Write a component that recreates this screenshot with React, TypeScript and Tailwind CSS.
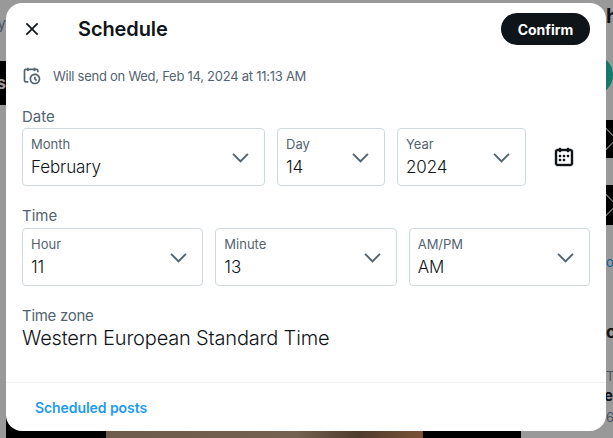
import React from 'react';

const font = 'font-["Inter","Liberation_Sans",sans-serif]';

const Chevron: React.FC = () => (
  <svg viewBox="0 0 24 24" className="w-[23px] h-[23px] fill-[#536471] shrink-0">
    <path d="M3.543 8.96l1.414-1.42L12 14.59l7.043-7.05 1.414 1.42L12 17.41 3.543 8.96z" />
  </svg>
);

const Field: React.FC<{ label: string; value: string; className: string }> = ({ label, value, className }) => (
  <div className={`h-[58px] border border-[#cfd9de] rounded-[4px] flex items-center justify-between pl-2 pr-[12px] ${className}`}>
    <div className="flex flex-col">
      <span className="text-[13px] leading-[16px] text-[#536471] -mt-[1px]">{label}</span>
      <span className="text-[17px] leading-[24px] font-light tracking-[-0.1px] text-[#0f1419] mt-[3px] -mb-[1px]">{value}</span>
    </div>
    <Chevron />
  </div>
);

export default function App() {
  return (
    <div className={`w-[613px] h-[438px] overflow-hidden bg-[#999999] flex flex-col ${font}`}>
      <div className="h-[3px] shrink-0" />
      <div className="flex h-[428px] shrink-0 relative z-10">
        {/* page behind the dialog, left edge */}
        <div className="w-[6px] shrink-0 overflow-hidden flex flex-col items-end">
          <div className="h-[12px] shrink-0" />
          <span className="text-[15px] leading-[18px] text-[#4b5258] whitespace-nowrap">y</span>
          <div className="h-[28px] shrink-0" />
          <div className="w-[6px] h-[44px] bg-black overflow-hidden flex items-center justify-end shrink-0">
            <span className="text-[17px] font-bold text-[#9a9a9a] leading-none">s</span>
          </div>
        </div>

        <div className="w-[600px] shrink-0 bg-white rounded-[16px] flex flex-col">
          <div className="h-[52px] flex items-center pl-4 pr-4 shrink-0">
            <svg viewBox="0 0 24 24" className="w-5 h-5 fill-[#0f1419]">
              <path d="M10.59 12L4.54 5.96l1.42-1.42L12 10.59l6.04-6.05 1.42 1.42L13.41 12l6.05 6.04-1.42 1.42L12 13.41l-6.04 6.05-1.42-1.42L10.59 12z" />
            </svg>
            <h1 className="ml-[36px] text-[20px] leading-[24px] font-semibold tracking-[-0.1px] text-[#0f1419] flex-1">Schedule</h1>
            <button className="w-[89px] h-[32px] rounded-full bg-[#0f1419] text-white text-[14px] font-bold">Confirm</button>
          </div>

          <div className="flex items-center pl-4 h-[20px] mt-[11px]">
            <svg viewBox="0 0 24 24" className="w-5 h-5 fill-[#536471] shrink-0">
              <path d="M6 3V2h2v1h6V2h2v1h1.5C18.88 3 20 4.119 20 5.5v2h-2v-2c0-.276-.22-.5-.5-.5H16v1h-2V5H8v1H6V5H4.5c-.28 0-.5.224-.5.5v12c0 .276.22.5.5.5h3v2h-3C3.12 20 2 18.881 2 17.5v-12C2 4.119 3.12 3 4.5 3H6zm9.5 8c-2.49 0-4.5 2.015-4.5 4.5s2.01 4.5 4.5 4.5 4.5-2.015 4.5-4.5-2.01-4.5-4.5-4.5zM9 15.5C9 11.91 11.91 9 15.5 9s6.5 2.91 6.5 6.5-2.91 6.5-6.5 6.5S9 19.09 9 15.5zm5.5-2.5h2v2.086l1.71 1.707-1.42 1.414-2.29-2.293V13z" />
            </svg>
            <span className="ml-[11px] text-[13px] leading-[16px] tracking-[-0.26px] text-[#536471]">Will send on Wed, Feb 14, 2024 at 11:13 AM</span>
          </div>

          <div className="px-4 mt-[21px]">
            <div className="text-[15px] leading-[20px] text-[#536471]">Date</div>
            <div className="flex gap-3 mt-[1px] items-center">
              <Field label="Month" value="February" className="w-[243px]" />
              <Field label="Day" value="14" className="w-[108px]" />
              <Field label="Year" value="2024" className="w-[129px]" />
              <div className="flex-1 flex justify-center">
                <svg viewBox="0 0 24 24" className="w-6 h-6 fill-[#0f1419] stroke-[#0f1419] stroke-[0.4]">
                  <path d="M7 4V3h2v1h6V3h2v1h1.5C19.89 4 21 5.12 21 6.5v12c0 1.38-1.11 2.5-2.5 2.5h-13C4.12 21 3 19.88 3 18.5v-12C3 5.12 4.12 4 5.5 4H7zm0 2H5.5c-.27 0-.5.22-.5.5v12c0 .28.23.5.5.5h13c.28 0 .5-.22.5-.5v-12c0-.28-.22-.5-.5-.5H17v1h-2V6H9v1H7V6zm0 6h2v-2H7v2zm0 4h2v-2H7v2zm4-4h2v-2h-2v2zm0 4h2v-2h-2v2zm4-4h2v-2h-2v2z" />
                </svg>
              </div>
            </div>

            <div className="text-[15px] leading-[20px] text-[#536471] mt-[20px]">Time</div>
            <div className="flex gap-3 mt-[2px]">
              <Field label="Hour" value="11" className="flex-1" />
              <Field label="Minute" value="13" className="flex-1" />
              <Field label="AM/PM" value="AM" className="flex-1" />
            </div>

            <div className="text-[15px] leading-[20px] tracking-[-0.3px] text-[#536471] mt-[20px]">Time zone</div>
            <div className="text-[20px] leading-[24px] font-light tracking-[-0.17px] text-[#0f1419]">Western European Standard Time</div>
          </div>

          <div className="mt-auto h-[49px] border-t border-[#eff3f4] flex items-center px-[29px] shrink-0">
            <span className="text-[14px] font-semibold tracking-[-0.07px] text-[#1d9bf0]">Scheduled posts</span>
          </div>
        </div>

        {/* page behind the dialog, right edge */}
        <div className="w-[7px] shrink-0 overflow-hidden flex flex-col">
          <span className="text-[20px] font-bold leading-[24px] text-[#0f1419] h-[24px] mt-[1px]">h</span>
          <div className="w-[40px] h-[40px] shrink-0 rounded-full bg-[#13796b] -ml-[33px] mt-[27px] self-start" />
          <div className="h-[38px] shrink-0 bg-black mt-[25px] flex items-center">
            <div className="w-[20px] h-[20px] shrink-0 rotate-45 border border-[#8a8a8a] -ml-[13px]" />
          </div>
          <div className="h-[40px] shrink-0 bg-black mt-[27px] flex items-center">
            <div className="w-[20px] h-[20px] shrink-0 rotate-45 border border-[#8a8a8a] -ml-[13px]" />
          </div>
          <span className="text-[13px] leading-[16px] text-[#0f5e96] mt-[29px] h-[16px] whitespace-nowrap">ov</span>
          <span className="text-[17px] font-bold leading-[20px] text-[#0f1419] mt-[52px] h-[20px]">o</span>
          <span className="text-[13px] leading-[16px] text-[#4b5258] mt-[26px] h-[16px] whitespace-nowrap">Tr</span>
          <span className="text-[15px] font-bold leading-[18px] text-[#0f1419] mt-[3px] h-[18px] whitespace-nowrap -ml-[2px]">e</span>
          <span className="text-[13px] leading-[16px] text-[#4b5258] mt-[4px] h-[16px]">6</span>
        </div>
      </div>

      {/* page behind the dialog, under it */}
      <div className="flex h-[24px] shrink-0 -mt-[17px] pl-[6px]">
        <div className="w-[100px] bg-black" />
        <div className="w-[317px] bg-[linear-gradient(90deg,#6f5b4b,#75614f_60%,#4f3b2c_80%,#7a5236)]" />
        <div className="w-[98px] bg-black" />
      </div>
    </div>
  );
}
